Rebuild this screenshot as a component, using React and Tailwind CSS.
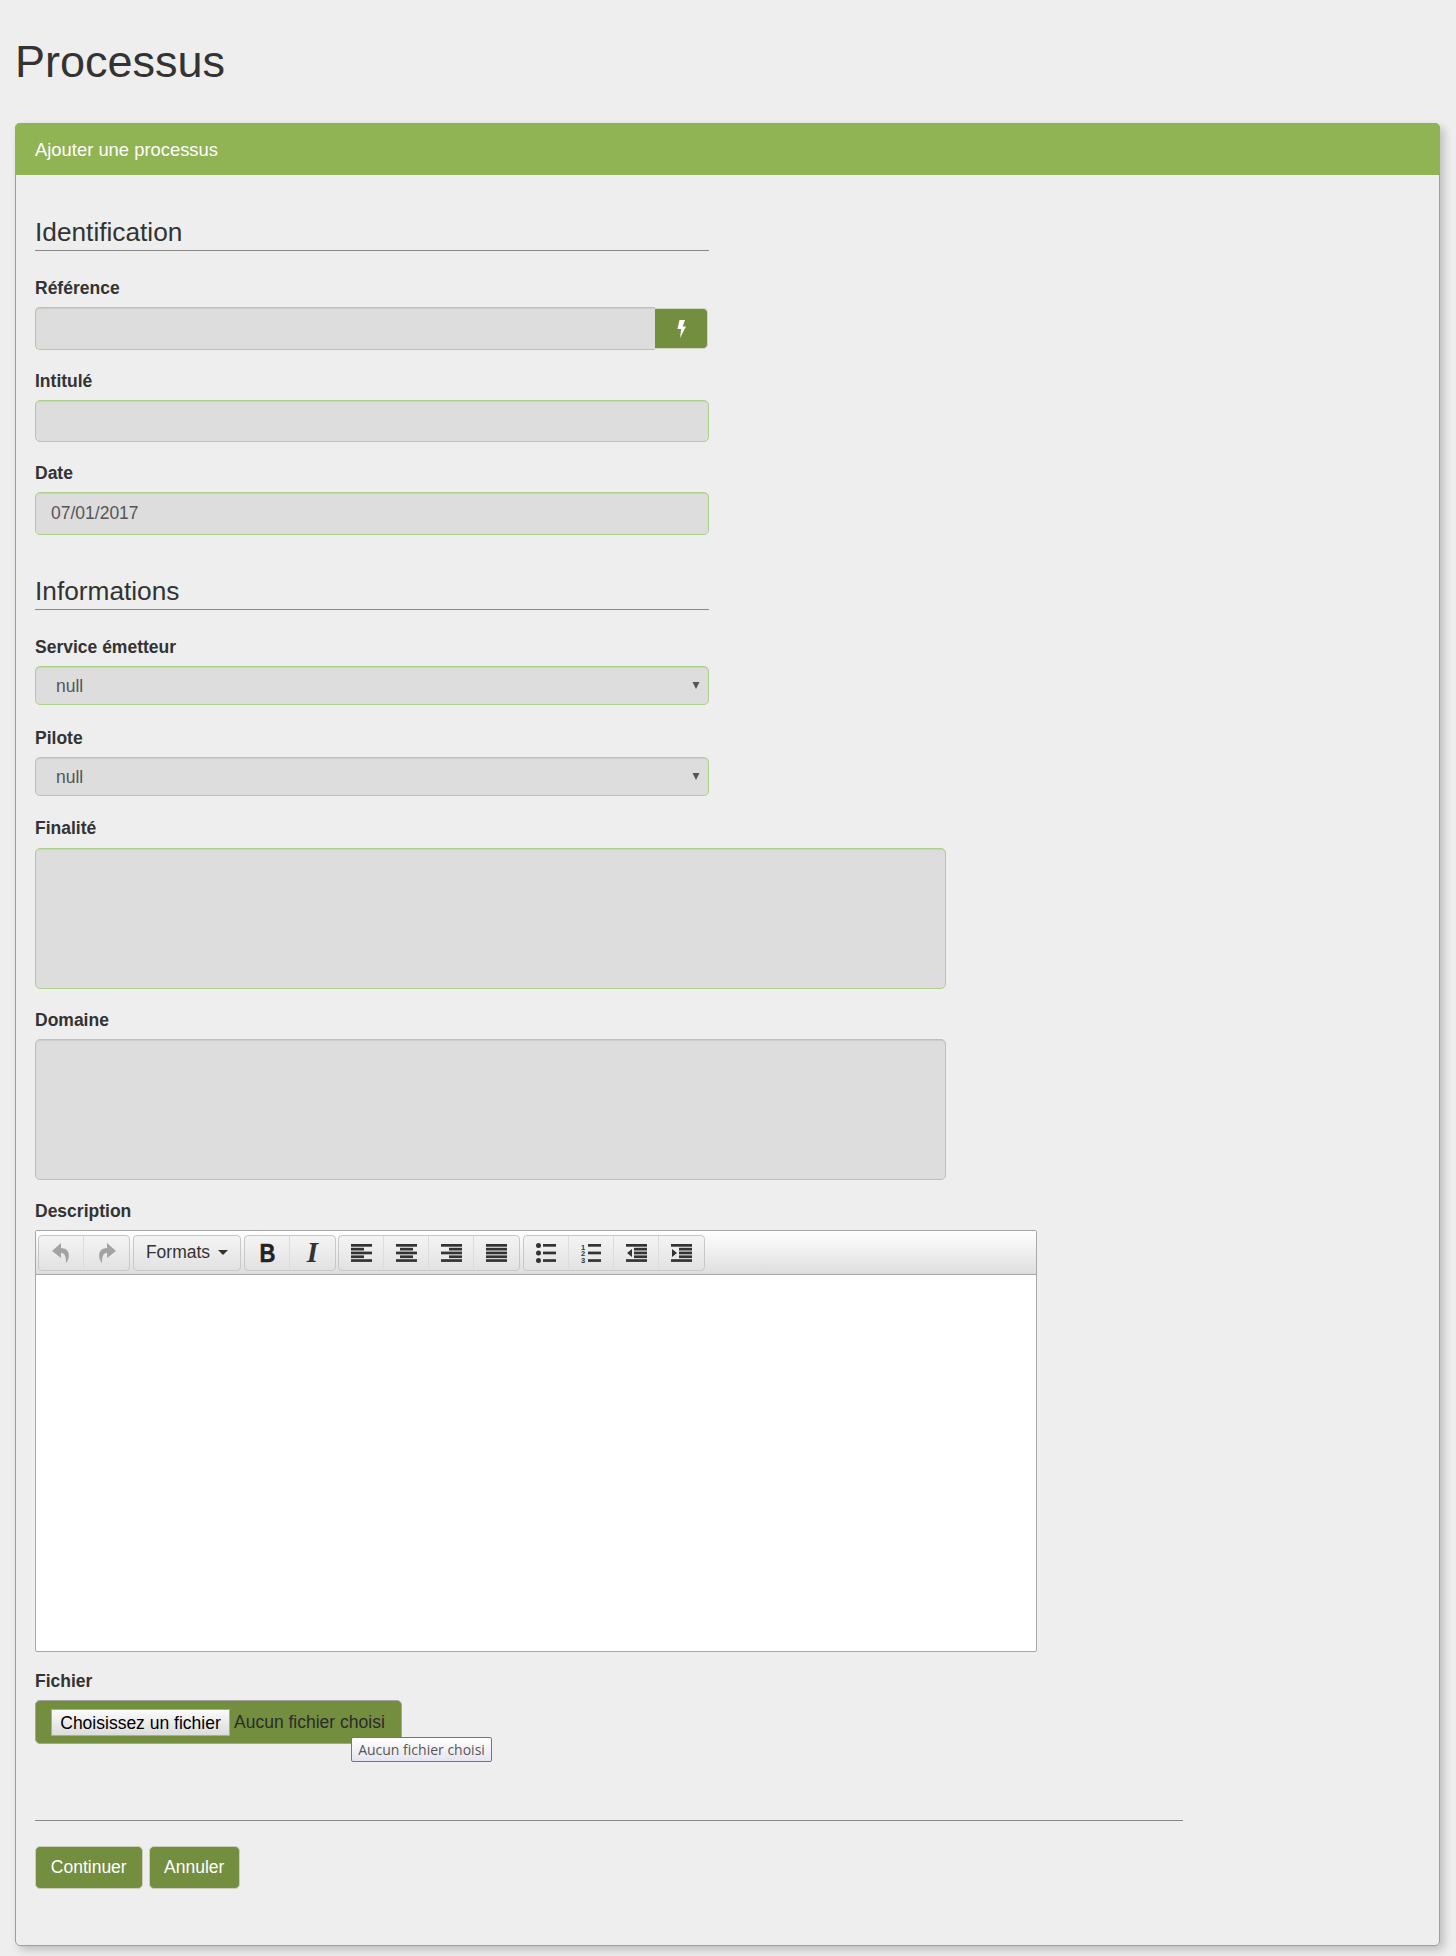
import { useState } from 'react';

const fieldClass = 'w-full h-[42.5px] bg-[#dddddd] border border-[#add08a] rounded-[5px] px-[15px] text-[17.5px] text-[#555555] shadow-[inset_0_1px_1px_rgba(0,0,0,0.075)] outline-none';

function Label({ children }) {
  return <label className="block h-[25px] mb-[6.25px] text-[17.5px] leading-[25px] font-bold text-[#333333]">{children}</label>;
}

function SectionTitle({ children }) {
  return (
    <h3 className="w-[674px] pb-[3px] mb-[25px] border-b border-[#888888] text-[26.25px] leading-[29px] text-[#333333]">
      {children}
    </h3>
  );
}

function SelectField({ label }) {
  return (
    <div className="w-[674px] mb-[20.75px]">
      <Label>{label}</Label>
      <div className="relative">
        <select className="appearance-none w-full h-[38.75px] bg-[#dddddd] border border-[#add08a] rounded-[5px] pl-[20px] pt-[1px] text-[17.5px] text-[#555555] shadow-[inset_0_1px_1px_rgba(0,0,0,0.075)] outline-none">
          <option>null</option>
        </select>
        <svg className="absolute right-[9px] top-[15px]" width="8" height="9" viewBox="0 0 8 9">
          <path d="M0.5 1H7.5L4 8Z" fill="#555555" />
        </svg>
      </div>
    </div>
  );
}

function TextareaField({ label }) {
  return (
    <div className="mb-[18.5px]">
      <Label>{label}</Label>
      <textarea className="block w-[911px] h-[141.5px] bg-[#dddddd] border border-[#add08a] rounded-[5px] shadow-[inset_0_1px_1px_rgba(0,0,0,0.075)] outline-none resize-none" />
    </div>
  );
}

// toolbar icons: five rows of bars, [x, width] for each row
const rowY = [0, 3.8, 7.6, 11.4, 15.2];

function Bars({ rows, children }) {
  return (
    <svg className="overflow-visible" width="21" height="18" viewBox="0 0 21 18" fill="#333333">
      {rows.map((r, i) => (
        r && <rect key={i} x={r[0]} y={rowY[i]} width={r[1]} height="2.7" />
      ))}
      {children}
    </svg>
  );
}

const alignLeft = [[0, 21], [0, 13], [0, 21], [0, 13], [0, 21]];
const alignCenter = [[0, 21], [4, 13], [0, 21], [4, 13], [0, 21]];
const alignRight = [[0, 21], [8, 13], [0, 21], [8, 13], [0, 21]];
const alignFull = [[0, 21], [0, 21], [0, 21], [0, 21], [0, 21]];
const listRows = [[7, 13], null, [7, 13], null, [7, 13]];
const indentRows = [[0, 21], [8, 13], [8, 13], [8, 13], [0, 21]];

function Tool({ children, last }) {
  return (
    <div className={`w-[45px] h-full flex items-center justify-center ${last ? '' : 'border-r border-[#dcdcdc]'}`}>
      {children}
    </div>
  );
}

function ToolGroup({ children, className }) {
  return (
    <div className={`flex h-[36px] items-center border border-[#c8c8c8] rounded-[4px] bg-gradient-to-b from-[#f4f4f4] to-[#e2e2e2] ${className}`}>
      {children}
    </div>
  );
}

function Toolbar() {
  return (
    <div className="flex items-center h-[44px] pl-[2px] border-b border-[#a8a8a8] bg-gradient-to-b from-[#ffffff] to-[#dedede]">
      <ToolGroup>
        <Tool>
          <svg width="18" height="20" viewBox="0 0 18 20" fill="#a3a3a3">
            <path d="M9 0 0 8 9 15V10C12 10 14 12 14 20 18 16 19 5 9 5Z" />
          </svg>
        </Tool>
        <Tool last>
          <svg width="18" height="20" viewBox="0 0 18 20" fill="#a3a3a3">
            <path d="M9 0 18 8 9 15V10C6 10 4 12 4 20 0 16-1 5 9 5Z" />
          </svg>
        </Tool>
      </ToolGroup>
      <ToolGroup className="ml-[3px]">
        <div className="w-[106px] flex items-center justify-center gap-[8px] text-[17.5px] text-[#333333]">
          Formats
          <svg width="10" height="5" viewBox="0 0 10 5"><path d="M0 0H10L5 5Z" fill="#333333" /></svg>
        </div>
      </ToolGroup>
      <ToolGroup className="ml-[3px]">
        <Tool><span className="inline-block scale-x-[0.85] text-[26px] font-black leading-none text-[#222222] [-webkit-text-stroke:0.5px_#222222]">B</span></Tool>
        <Tool last><span className="text-[29px] font-bold italic leading-none text-[#333333] [font-family:'Liberation_Serif',serif]">I</span></Tool>
      </ToolGroup>
      <ToolGroup className="ml-[2px]">
        <Tool><Bars rows={alignLeft} /></Tool>
        <Tool><Bars rows={alignCenter} /></Tool>
        <Tool><Bars rows={alignRight} /></Tool>
        <Tool last><Bars rows={alignFull} /></Tool>
      </ToolGroup>
      <ToolGroup className="ml-[3px]">
        <Tool>
          <Bars rows={listRows}>
            <circle cx="2.5" cy="1.5" r="2.5" /><circle cx="2.5" cy="9" r="2.5" /><circle cx="2.5" cy="16.5" r="2.5" />
          </Bars>
        </Tool>
        <Tool>
          <Bars rows={listRows}>
            <text x="0" y="6" fontSize="7.5" fontWeight="bold" fontFamily="Liberation Sans">1</text>
            <text x="0" y="12.3" fontSize="7.5" fontWeight="bold" fontFamily="Liberation Sans">2</text>
            <text x="0" y="18.5" fontSize="7.5" fontWeight="bold" fontFamily="Liberation Sans">3</text>
          </Bars>
        </Tool>
        <Tool>
          <Bars rows={indentRows}>
            <path d="M6 5V13L1 9Z" />
          </Bars>
        </Tool>
        <Tool last>
          <Bars rows={indentRows}>
            <path d="M1 5V13L6 9Z" />
          </Bars>
        </Tool>
      </ToolGroup>
    </div>
  );
}

export default function App() {
  const [date, setDate] = useState('07/01/2017');

  return (
    <div className="min-h-[1956px] bg-[#eeeeee] pl-[15px] pr-[16px] pt-[37px] pb-[10px] [font-family:'Liberation_Sans',Arial,sans-serif]">
      <h1 className="text-[45px] leading-[49.5px] mb-[36.5px] text-[#333333]">Processus</h1>

      <div className="h-[1823px] border border-[#8fb354] rounded-[5px] shadow-[4px_4px_8px_rgba(0,0,0,0.2)]">
        <div className="h-[52px] -mx-px -mt-px flex items-center pl-[20px] pt-[1px] bg-[#90b354] rounded-t-[5px] text-[18.4px] text-white">
          Ajouter une processus
        </div>

        <div className="pl-[19px] pt-[43px]">
          <SectionTitle>Identification</SectionTitle>

          <div className="w-[674px] mb-[18.75px]">
            <Label>Référence</Label>
            <div className="flex">
              <input className={`${fieldClass} !w-[620px] rounded-r-none border-r-0`} readOnly />
              <button className="w-[53px] h-[41px] mt-px flex items-center justify-center bg-[#748e3f] border border-[#cfd6c0] border-l-0 rounded-r-[5px]">
                <svg width="11" height="18" viewBox="0 0 11 18"><path d="M3.5 0H9L6.7 6.5H10L4 18 5.2 9H1.5Z" fill="#ffffff" /></svg>
              </button>
            </div>
          </div>

          <div className="w-[674px] mb-[18.75px]">
            <Label>Intitulé</Label>
            <input className={fieldClass} readOnly />
          </div>

          <div className="w-[674px] mb-[42px]">
            <Label>Date</Label>
            <input className={fieldClass} value={date} onChange={e => setDate(e.target.value)} />
          </div>

          <SectionTitle>Informations</SectionTitle>

          <SelectField label="Service émetteur" />
          <SelectField label="Pilote" />

          <TextareaField label="Finalité" />
          <TextareaField label="Domaine" />

          <div className="mb-[17px]">
            <Label>Description</Label>
            <div className="w-[1002px] h-[422px] bg-white border border-[#a8a8a8] rounded-[2px]">
              <Toolbar />
            </div>
          </div>

          <Label>Fichier</Label>
          <div className="relative w-[367px] h-[44px] flex items-center pl-[15px] bg-[#748e3f] border border-[#a3a3a3] rounded-[5px] text-[17.5px] text-[#2b2b2b]">
            <button className="w-[179px] h-[27px] bg-gradient-to-b from-[#fbfbfb] to-[#dcdcdc] border border-[#a8a8a8] text-black">Choisissez un fichier</button>
            <span className="ml-[4px]">Aucun fichier choisi</span>
            <div className="absolute left-[315px] top-[36px] w-[141px] h-[25px] flex items-center justify-center bg-gradient-to-b from-white to-[#e4e5f0] border border-[#767676] rounded-[2px] text-[14px] text-[#575757] [font-family:'Open_Sans',sans-serif]">
              Aucun fichier choisi
            </div>
          </div>

          <div className="w-[1148px] mt-[76px] mb-[25px] border-t border-[#888888]" />

          <div className="flex gap-[6px]">
            <button className="w-[107.5px] h-[42.5px] bg-[#748e3f] border border-[#c9cfbb] rounded-[5px] text-[17.5px] text-white">Continuer</button>
            <button className="w-[91.5px] h-[42.5px] bg-[#748e3f] border border-[#c9cfbb] rounded-[5px] text-[17.5px] text-white">Annuler</button>
          </div>
        </div>
      </div>
    </div>
  );
}
